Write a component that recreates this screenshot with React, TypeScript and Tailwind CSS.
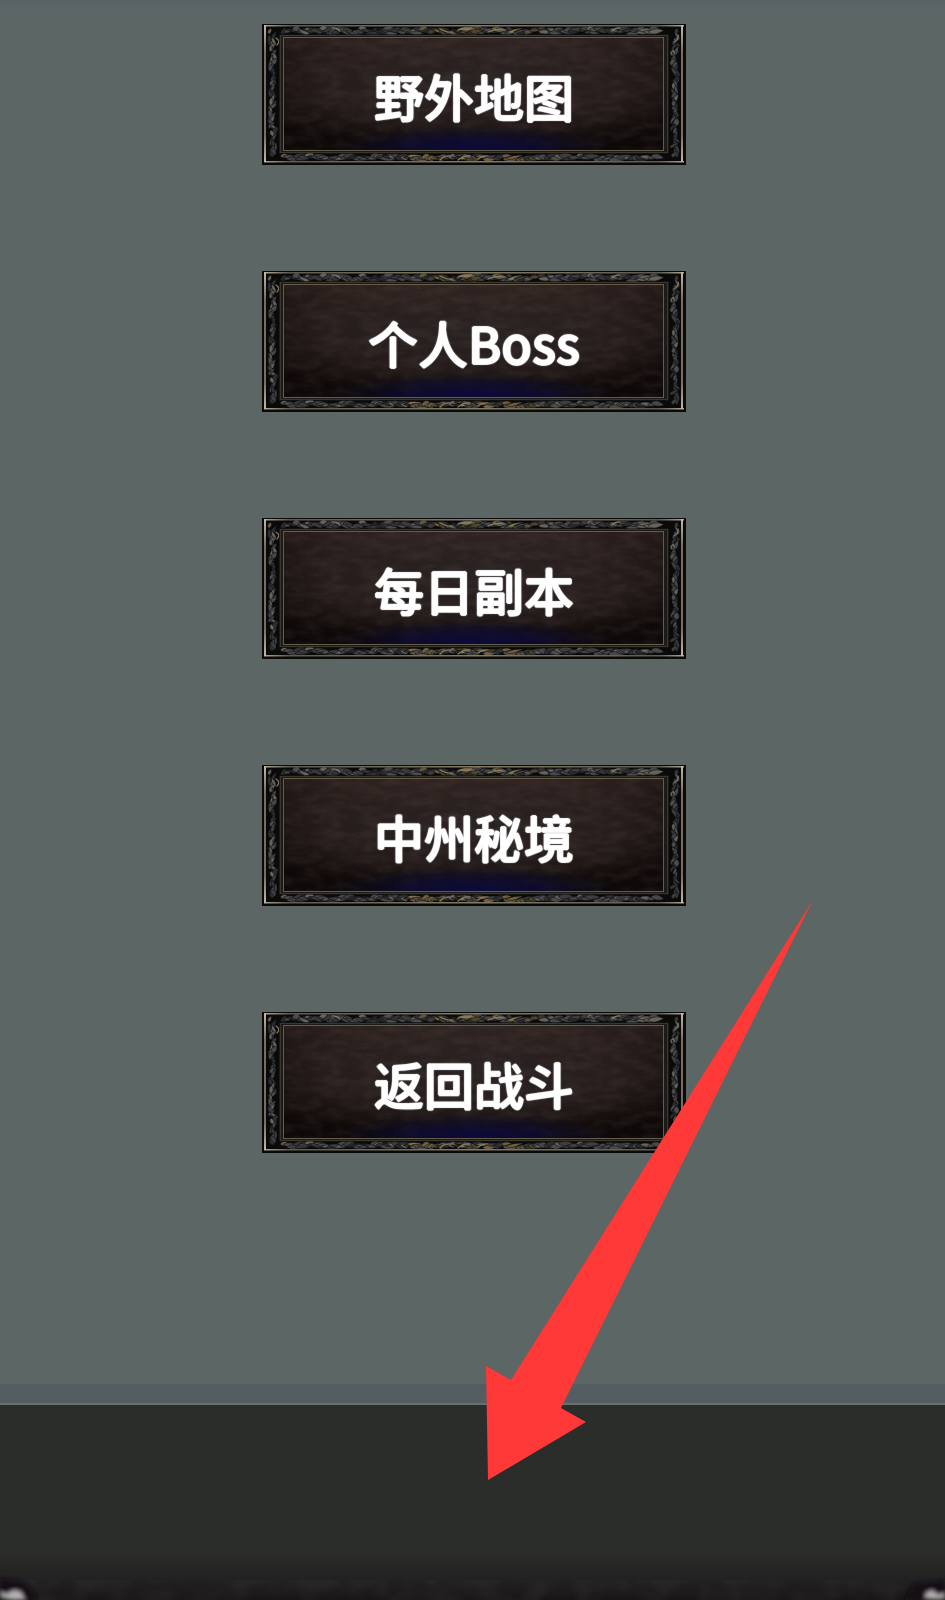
import { useId } from 'react';

const menuItems = ['野外地图', '个人Boss', '每日副本', '中州秘境', '返回战斗'];

const GREYS = ['#3c3e40', '#4b4c4d', '#2c2e31', '#66625b', '#363638', '#44474a'];
const GOLDS = ['#6f6040', '#8a7952', '#4d4532', '#5c5648', '#373227'];

interface ILeaf {
  d: string;
  color: string;
}

const makeRandom = (seed: number) => {
  let s = seed;
  return () => {
    s = (s * 16807) % 2147483647;
    return s / 2147483647;
  };
};

const pick = (palette: string[], value: number) => palette[Math.floor(value * palette.length)];

// carved leaves of the horizontal rails, golden towards the middle
const makeRail = (y: number, height: number, seed: number): ILeaf[] => {
  const rnd = makeRandom(seed);
  const leaves: ILeaf[] = [];
  for (let x = 18; x < 404; x += 3) {
    const gold = Math.abs(x - 212) < 75 && rnd() > 0.4;
    const dir = x < 212 ? 1 : -1;
    const len = (8 + rnd() * 10) * dir;
    const fat = 3 + rnd() * 3;
    const y1 = y + rnd() * height;
    const dy = y + rnd() * height - y1;
    leaves.push({
      d: `M${x} ${y1} q${len / 2} ${dy - fat} ${len} ${dy} q${-len / 3} ${fat} ${-len} ${-dy} Z`,
      color: pick(gold ? GOLDS : GREYS, rnd()),
    });
  }
  return leaves;
};

const makePost = (x: number, width: number, seed: number): ILeaf[] => {
  const rnd = makeRandom(seed);
  const leaves: ILeaf[] = [];
  for (let y = 4; y < 130; y += 3) {
    const len = 6 + rnd() * 7;
    const fat = 3 + rnd() * 3;
    const x1 = x + rnd() * width;
    const dx = x + rnd() * width - x1;
    leaves.push({
      d: `M${x1} ${y} q${dx - fat} ${len / 2} ${dx} ${len} q${fat} ${-len / 3} ${-dx} ${-len} Z`,
      color: pick(GREYS, rnd()),
    });
  }
  return leaves;
};

const carving = [
  ...makeRail(4, 6, 4211),
  ...makeRail(131, 5, 977),
  ...makePost(7, 8, 3301),
  ...makePost(409, 8, 8123),
];

const highlights = [
  'M70 4q4 -1 8 3',
  'M350 7q4 -4 8 -3',
  'M196 6q6 -3 14 -2',
  'M202 4l10 1',
  'M226 8q8 -4 14 -2',
  'M178 5q8 4 12 3',
  'M178 136q4 -4 10 -4',
  'M196 136q6 -5 12 -4',
  'M216 135q5 -4 10 -3',
  'M14 14q5 3 1 7',
  'M412 18q5 -3 4 -7',
];

const Frame = () => {
  const id = useId();

  return (
    <svg
      className="absolute inset-0 h-full w-full"
      viewBox="0 0 424 141"
      preserveAspectRatio="none"
      aria-hidden="true"
    >
      <defs>
        <radialGradient id={`${id}panel`} cx="0.5" cy="0.4" r="0.62">
          <stop offset="0" stopColor="#292322" />
          <stop offset="0.65" stopColor="#261d1b" />
          <stop offset="1" stopColor="#100a08" />
        </radialGradient>
        <linearGradient id={`${id}shade`} x1="0" y1="0" x2="0" y2="1">
          <stop offset="0" stopColor="#3a2a27" stopOpacity="0.55" />
          <stop offset="0.4" stopColor="#2a201e" stopOpacity="0" />
          <stop offset="0.7" stopColor="#0a0808" stopOpacity="0.1" />
          <stop offset="1" stopColor="#0a0808" stopOpacity="0.5" />
        </linearGradient>
        <radialGradient
          id={`${id}glow`}
          gradientUnits="userSpaceOnUse"
          cx="0"
          cy="0"
          r="1"
          gradientTransform="translate(212 127) scale(145 26)"
        >
          <stop offset="0" stopColor="#0b0a3c" />
          <stop offset="0.5" stopColor="#0c0a36" stopOpacity="0.7" />
          <stop offset="1" stopColor="#0c0a28" stopOpacity="0" />
        </radialGradient>
        <linearGradient id={`${id}edge`} x1="0" y1="0" x2="1" y2="0">
          <stop offset="0" stopColor="#b0a794" />
          <stop offset="0.06" stopColor="#5d5b50" />
          <stop offset="0.5" stopColor="#857a62" />
          <stop offset="0.94" stopColor="#5d5b50" />
          <stop offset="1" stopColor="#b0a794" />
        </linearGradient>
        <linearGradient id={`${id}side`} x1="0" y1="0" x2="0" y2="1">
          <stop offset="0" stopColor="#c4b9a5" />
          <stop offset="0.2" stopColor="#776e60" />
          <stop offset="0.8" stopColor="#776e60" />
          <stop offset="1" stopColor="#c4b9a5" />
        </linearGradient>
        <filter id={`${id}grain`} x="0" y="0" width="1" height="1">
          <feTurbulence type="fractalNoise" baseFrequency="0.05 0.12" numOctaves="3" seed="8" />
          <feColorMatrix values="0 0 0 0 0.3  0 0 0 0 0.22  0 0 0 0 0.2  1 0 0 0 -0.35" />
        </filter>
        <filter id={`${id}smooth`}>
          <feGaussianBlur stdDeviation="0.4" />
        </filter>
      </defs>
      <rect width="424" height="141" fill="#0a0a0a" />
      <g filter={`url(#${id}smooth)`}>
        {carving.map((leaf, i) => (
          <path key={i} d={leaf.d} fill={leaf.color} stroke="#08080a" strokeWidth="0.5" />
        ))}
        {highlights.map((d) => (
          <path key={d} d={d} fill="none" stroke="#857b66" strokeWidth="1.2" strokeLinecap="round" />
        ))}
      </g>
      <rect x="2" y="1" width="420" height="1.5" fill={`url(#${id}edge)`} />
      <rect x="2" y="137" width="420" height="1.5" fill={`url(#${id}edge)`} />
      <rect x="2" y="1" width="2" height="137" fill={`url(#${id}side)`} />
      <rect x="419" y="1" width="2" height="137" fill={`url(#${id}side)`} />
      <rect x="17" y="10.5" width="390" height="119" fill="#1c1b17" />
      <rect x="18.5" y="11.5" width="387" height="117" fill="none" stroke="#39372c" />
      <rect x="21" y="13" width="381" height="114" fill={`url(#${id}panel)`} />
      <rect x="21" y="13" width="381" height="114" fill={`url(#${id}shade)`} />
      <rect x="21" y="13" width="381" height="114" filter={`url(#${id}grain)`} opacity="0.22" />
      <rect x="66" y="99" width="292" height="28" fill={`url(#${id}glow)`} />
      <rect x="21.5" y="13.5" width="380" height="113" fill="none" stroke="#635b4c" />
    </svg>
  );
};

const MenuButton: React.FC<{ label: string }> = ({ label }) => (
  <button
    type="button"
    className="relative flex h-[141px] w-[424px] max-w-full cursor-pointer items-center justify-center"
  >
    <Frame />
    <span className="relative text-[50px] leading-[60px] font-medium text-white [text-shadow:1px_0_1px_white,-1px_0_1px_white,0_1px_1px_white,0_-1px_1px_white]">
      {label}
    </span>
  </button>
);

const Arrow = () => (
  <svg
    className="pointer-events-none absolute top-[900px] left-1/2 ml-[13px] h-[580px] w-[328px]"
    viewBox="0 0 328 580"
    aria-hidden="true"
  >
    <path d="M327 0L25 480L0 466L2 580L100 522L75 508Z" fill="#ff3838" />
  </svg>
);

const App = () => {
  return (
    <div className="relative flex min-h-screen flex-col overflow-hidden bg-[#5c6664] font-['Noto_Sans_CJK_SC',sans-serif]">
      <div className="h-4 bg-linear-to-b from-[#5a6267] to-[#5c6666]" />
      <main className="flex flex-1 flex-col items-center gap-[106px] pt-2 pb-16 pl-[3px]">
        {menuItems.map((item) => (
          <MenuButton key={item} label={item} />
        ))}
      </main>
      <div className="h-[21px] border-b-2 border-[#66716f] bg-[#545e62]" />
      <footer className="flex h-[195px] flex-col justify-end bg-[#2b2d2a]">
        <svg className="h-12 w-full" viewBox="0 0 945 48" preserveAspectRatio="none" aria-hidden="true">
          <defs>
            <linearGradient id="fade" x1="0" y1="0" x2="0" y2="1">
              <stop offset="0" stopColor="#2b2d2a" />
              <stop offset="0.5" stopColor="#232322" />
              <stop offset="1" stopColor="#191618" />
            </linearGradient>
            <filter id="soft">
              <feGaussianBlur stdDeviation="2" />
            </filter>
            <filter id="mottle" x="0" y="0" width="1" height="1">
              <feTurbulence type="fractalNoise" baseFrequency="0.04 0.05" numOctaves="2" seed="3" />
              <feColorMatrix values="0 0 0 0 0.05  0 0 0 0 0.04  0 0 0 0 0.05  2 0 0 0 -0.7" />
            </filter>
          </defs>
          <rect width="945" height="48" fill="url(#fade)" />
          <rect y="28" width="945" height="20" filter="url(#mottle)" opacity="0.3" />
          <g filter="url(#soft)">
            <path d="M0 26L24 30L34 40L36 48H0ZM945 28L914 32L904 48H945Z" fill="#121012" />
            <path d="M0 40L7 42L14 38L21 40L25 48H12L0 44ZM945 41L938 43L932 38L926 41L925 46L936 47L945 46Z" fill="#b5b2b2" />
          </g>
        </svg>
      </footer>
      <Arrow />
    </div>
  );
};

export default App;
